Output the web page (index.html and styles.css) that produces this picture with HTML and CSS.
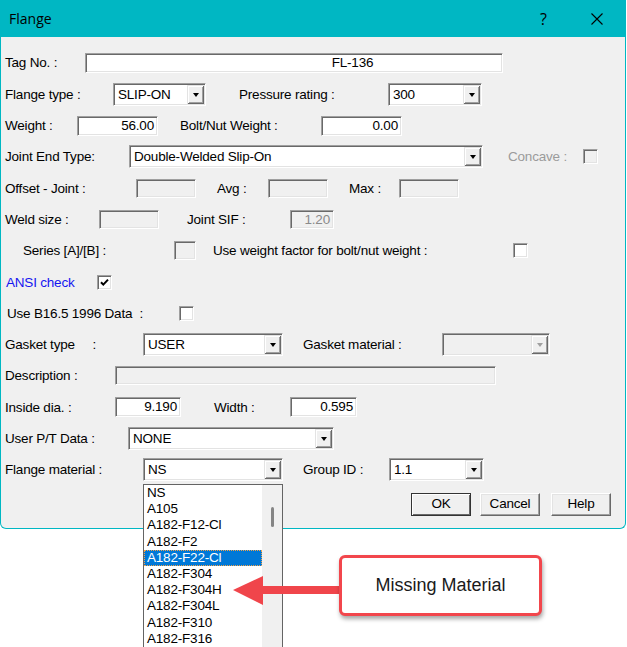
FILE: index.html
```html
<!DOCTYPE html>
<html lang="en">
<head>
    <meta charset="UTF-8">
    <meta name="viewport" content="width=device-width, initial-scale=1.0">
    <title>Flange</title>
    <link rel="stylesheet" href="styles.css">
</head>
<body>

    <div class="dlg">
        <div class="titlebar">
            <span class="title">Flange</span>
            <span class="help">?</span>
            <svg class="close" width="12" height="12" viewBox="0 0 12 12"><path d="M0.5 0.5L11.5 11.5M11.5 0.5L0.5 11.5" stroke="#000" stroke-width="1.1" fill="none"/></svg>
        </div><!--titlebar-->

        <div class="form">
            <div class="row">
                <span class="lbl l-tag">Tag No. :</span>
                <div class="edit e-tag">FL-136</div>
            </div>

            <div class="row">
                <span class="lbl l-ftype">Flange type :</span>
                <div class="combo c-ftype"><span class="val">SLIP-ON</span><span class="arr"></span></div>
                <span class="lbl l-press">Pressure rating :</span>
                <div class="combo c-press"><span class="val">300</span><span class="arr"></span></div>
            </div>

            <div class="row">
                <span class="lbl l-weight">Weight :</span>
                <div class="edit num e-weight">56.00</div>
                <span class="lbl l-bolt">Bolt/Nut Weight :</span>
                <div class="edit num e-bolt">0.00</div>
            </div>

            <div class="row">
                <span class="lbl l-joint">Joint End Type:</span>
                <div class="combo c-joint"><span class="val">Double-Welded Slip-On</span><span class="arr"></span></div>
                <span class="lbl dim l-concave">Concave :</span>
                <div class="chk off"></div>
            </div>

            <div class="row">
                <span class="lbl l-offset">Offset - Joint :</span>
                <div class="edit off e-box"></div>
                <span class="lbl l-avg">Avg :</span>
                <div class="edit off e-box"></div>
                <span class="lbl l-max">Max :</span>
                <div class="edit off e-box"></div>
            </div>

            <div class="row">
                <span class="lbl l-weld">Weld size :</span>
                <div class="edit off e-box"></div>
                <span class="lbl l-sif">Joint SIF :</span>
                <div class="edit off num e-sif">1.20</div>
            </div>

            <div class="row">
                <span class="lbl l-series">Series [A]/[B] :</span>
                <div class="chk off big"></div>
                <span class="lbl l-factor">Use weight factor for bolt/nut weight :</span>
                <div class="chk"></div>
            </div>

            <div class="row">
                <span class="lbl link l-ansi">ANSI check</span>
                <div class="chk">
                    <svg width="11" height="11" viewBox="0 0 11 11"><path d="M2 5.2L4.3 7.6L9 2.6" stroke="#000" stroke-width="2" fill="none"/></svg>
                </div>
            </div>

            <div class="row">
                <span class="lbl l-b165">Use B16.5 1996 Data&nbsp;&nbsp;:</span>
                <div class="chk"></div>
            </div>

            <div class="row">
                <span class="lbl l-gtype">Gasket type&nbsp;&nbsp;&nbsp;&nbsp;&nbsp;:</span>
                <div class="combo c-mat"><span class="val">USER</span><span class="arr"></span></div>
                <span class="lbl l-gmat">Gasket material :</span>
                <div class="combo off c-gmat"><span class="val"></span><span class="arr"></span></div>
            </div>

            <div class="row">
                <span class="lbl l-desc">Description :</span>
                <div class="edit off e-desc"></div>
            </div>

            <div class="row">
                <span class="lbl l-inside">Inside dia. :</span>
                <div class="edit num e-inside">9.190</div>
                <span class="lbl l-width">Width :</span>
                <div class="edit num e-width">0.595</div>
            </div>

            <div class="row">
                <span class="lbl l-pt">User P/T Data :</span>
                <div class="combo c-pt"><span class="val">NONE</span><span class="arr"></span></div>
            </div>

            <div class="row">
                <span class="lbl l-fmat">Flange material :</span>
                <div class="combo c-mat"><span class="val">NS</span><span class="arr"></span></div>
                <span class="lbl l-group">Group ID :</span>
                <div class="combo c-group"><span class="val">1.1</span><span class="arr"></span></div>
            </div>

            <div class="buttons">
                <button class="btn def">OK</button>
                <button class="btn b-cancel">Cancel</button>
                <button class="btn b-help">Help</button>
            </div>
        </div><!--form-->
    </div><!--dlg-->

    <!-- open list of the flange material combo -->
    <div class="droplist">
        <ul>
            <li>NS</li>
            <li>A105</li>
            <li>A182-F12-Cl</li>
            <li>A182-F2</li>
            <li class="sel">A182-F22-Cl</li>
            <li>A182-F304</li>
            <li>A182-F304H</li>
            <li>A182-F304L</li>
            <li>A182-F310</li>
            <li>A182-F316</li>
        </ul>
        <div class="vscroll"><span class="thumb"></span></div>
    </div><!--droplist-->

    <svg class="arrow" width="115" height="34" viewBox="0 0 115 34">
        <rect x="31" y="12" width="84" height="8" fill="#f0454b"/>
        <polygon points="3,16 33,2 33,31" fill="#f0454b"/>
    </svg>

    <div class="callout">Missing Material</div>

</body>
</html>
```

FILE: styles.css
```css
*{
    margin:0;
    padding:0;
}

body{
    position: relative;
    height: 647px;
    overflow: hidden;
    background: #fff;
    font-family: "Liberation Sans", Arial, sans-serif;
    font-size: 13.5px;
    letter-spacing: -0.2px;
    color: #000;
}

/* window */
.dlg{
    width: 626px;
    height: 529px;
    box-sizing: border-box;
    background: #f0f0f0;
    border: 1px solid #00b7c3;
    border-top: none;
    border-radius: 0 0 6px 6px;
}

.titlebar{
    display: flex;
    align-items: center;
    height: 37px;
    margin: 0 -1px;
    background: #00b7c3;
}
.title{
    font-family: "Open Sans", "Noto Sans", sans-serif;
    font-size: 14px;
    letter-spacing: 0;
    margin-left: 9px;
}
.help{
    font-family: "Open Sans", "Noto Sans", sans-serif;
    font-size: 16px;
    letter-spacing: 0;
    margin-left: auto;
}
.close{
    margin-left: 44px;
    margin-right: 23px;
}

.form{
    padding-top: 10.35px;
}
.row{
    display: flex;
    align-items: center;
    height: 31.3px;
}
.lbl{
    flex: none;
    white-space: nowrap;
}
.lbl.dim{
    color: #9b9b9b;
}
.lbl.link{
    color: #1515f0;
}

/* sunken text box */
.edit{
    flex: none;
    height: 20px;
    box-sizing: border-box;
    background: #fff;
    border: 1px solid;
    border-color: #a0a0a0 #fff #fff #a0a0a0;
    box-shadow: inset 1px 1px #696969, inset -1px -1px #e3e3e3;
    padding: 0 3px;
    line-height: 18px;
    white-space: nowrap;
    overflow: hidden;
}
.edit.num{
    text-align: right;
}
.edit.off{
    height: 19px;
    line-height: 17px;
    background: #f0f0f0;
    color: #8a8a8a;
}

/* drop-down combo */
.combo{
    flex: none;
    display: flex;
    height: 23px;
    box-sizing: border-box;
    background: #fff;
    border: 1px solid;
    border-color: #a0a0a0 #fff #fff #a0a0a0;
    box-shadow: inset 1px 1px #696969, inset -1px -1px #e3e3e3;
    padding: 1px;
}
.combo .val{
    flex: 1;
    padding-left: 3px;
    line-height: 20px;
    white-space: nowrap;
    overflow: hidden;
}
.combo .arr{
    width: 17px;
    display: flex;
    align-items: center;
    justify-content: center;
    background: #f0f0f0;
    box-shadow: inset 1px 1px #e3e3e3, inset -1px -1px #696969, inset 2px 2px #fff, inset -2px -2px #a0a0a0;
}
.combo .arr::after{
    content: "";
    border-style: solid;
    border-width: 4px 3.5px 0;
    border-color: #000 transparent transparent;
    margin-top: 1px;
}
.combo.off{
    background: #f0f0f0;
}
.combo.off .arr::after{
    border-top-color: #a0a0a0;
}

/* check box */
.chk{
    flex: none;
    width: 15px;
    height: 15px;
    box-sizing: border-box;
    background: #fff;
    border: 1px solid;
    border-color: #a0a0a0 #fff #fff #a0a0a0;
    box-shadow: inset 1px 1px #696969, inset -1px -1px #e3e3e3;
    display: flex;
    align-items: center;
    justify-content: center;
}
.chk.off{
    background: #f0f0f0;
}
.chk.big{
    width: 22px;
    height: 19px;
}

/* label widths and gaps, row by row */
.l-tag{ margin-left: 4px; width: 80px; }
.e-tag{ width: 418px; text-align: center; padding-left: 120px; }

.l-ftype{ margin-left: 4px; width: 108px; }
.c-ftype{ width: 93px; }
.l-press{ margin-left: 33px; width: 149px; }
.c-press{ width: 94px; }

.l-weight{ margin-left: 4px; width: 72px; }
.e-weight{ width: 81px; }
.l-bolt{ margin-left: 22px; width: 141px; }
.e-bolt{ width: 81px; }

.l-joint{ margin-left: 4px; width: 124px; }
.c-joint{ width: 354px; }
.l-concave{ margin-left: 25px; width: 75px; }

.l-offset{ margin-left: 4px; width: 131px; }
.e-box{ width: 60px; }
.l-avg{ margin-left: 21px; width: 51px; }
.l-max{ margin-left: 21px; width: 50px; }

.l-weld{ margin-left: 4px; width: 94px; }
.l-sif{ margin-left: 28px; width: 103px; }
.e-sif{ width: 44px; }

.l-series{ margin-left: 22px; width: 151px; }
.l-factor{ margin-left: 17px; width: 300px; }

.l-ansi{ margin-left: 5px; width: 91px; }

.l-b165{ margin-left: 6px; width: 172px; }

.l-gtype{ margin-left: 4px; width: 138px; }
.c-mat{ width: 140px; }
.l-gmat{ margin-left: 20px; width: 139px; }
.c-gmat{ width: 108px; }

.l-desc{ margin-left: 4px; width: 110px; }
.e-desc{ width: 381px; }

.l-inside{ margin-left: 4px; width: 110px; }
.e-inside{ width: 66px; }
.l-width{ margin-left: 33px; width: 76px; }
.e-width{ width: 67px; }

.l-pt{ margin-left: 4px; width: 123px; }
.c-pt{ width: 206px; }

.l-fmat{ margin-left: 4px; width: 138px; }
.l-group{ margin-left: 20px; width: 86px; }
.c-group{ width: 95px; }

/* push buttons */
.buttons{
    display: flex;
    justify-content: flex-end;
    margin-top: 7.45px;
    padding-right: 14px;
}
.btn{
    width: 60px;
    height: 23px;
    box-sizing: border-box;
    background: #f0f0f0;
    border: 1px solid;
    border-color: #fff #696969 #696969 #fff;
    box-shadow: inset -1px -1px #a0a0a0, inset 1px 1px #e3e3e3;
    font: inherit;
    letter-spacing: inherit;
    line-height: 20px;
}
.btn.def{
    border-color: #333;
    box-shadow: inset 1px 1px #fff, inset -1px -1px #696969;
}
.b-cancel{ margin-left: 9px; }
.b-help{ margin-left: 11px; }

/* open list */
.droplist{
    position: absolute;
    left: 143px;
    top: 484px;
    width: 140px;
    height: 175px;
    box-sizing: border-box;
    display: flex;
    background: #fff;
    border: 1px solid #646464;
    overflow: hidden;
}
.droplist ul{
    list-style: none;
    width: 119px;
}
.droplist li{
    height: 16.2px;
    line-height: 16.2px;
    padding-left: 3px;
    white-space: nowrap;
}
.droplist li.sel{
    background: #0078d7;
    color: #fff;
    outline: 1px dotted #f3a34a;
    outline-offset: -1px;
}
.vscroll{
    width: 20px;
    background: #f0f0f0;
}
.thumb{
    display: block;
    width: 3px;
    height: 20px;
    margin: 22px 0 0 9px;
    border-radius: 2px;
    background: #858585;
}

/* annotation */
.arrow{
    position: absolute;
    left: 230px;
    top: 574px;
}
.callout{
    position: absolute;
    left: 339px;
    top: 555px;
    width: 203px;
    height: 61px;
    box-sizing: border-box;
    display: flex;
    align-items: center;
    justify-content: center;
    background: #fff;
    border: 3px solid #f2464c;
    border-radius: 6px;
    box-shadow: 1px 3px 4px rgba(0,0,0,.35);
    font-size: 18px;
    letter-spacing: 0;
    color: #1a1a1a;
}
```
